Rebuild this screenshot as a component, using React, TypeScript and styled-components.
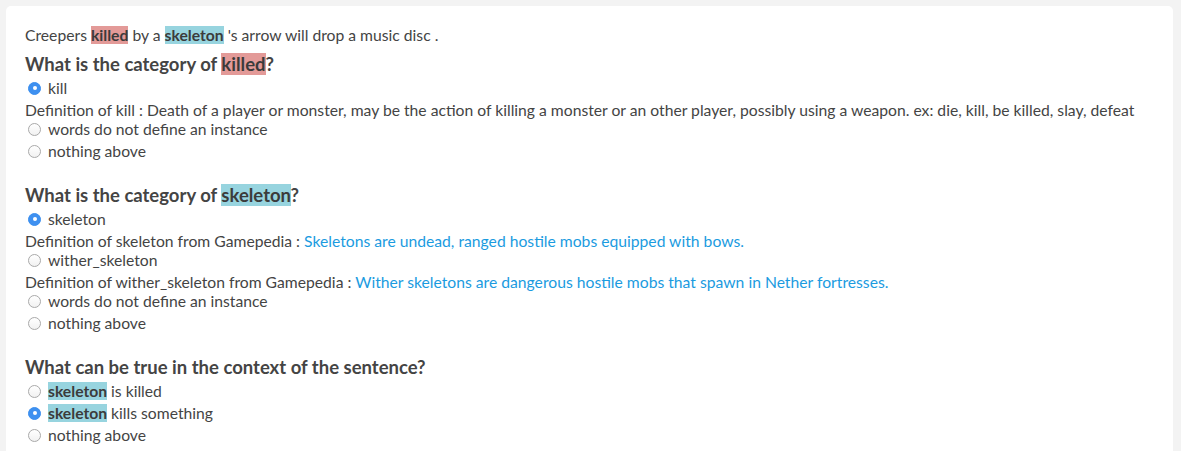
import React from "react";
import styled, { createGlobalStyle } from "styled-components";

const Global = createGlobalStyle`
  html, body { margin: 0; padding: 0; }
  body {
    background: #f3f3f3;
    font-family: Lato, "Open Sans", "Liberation Sans", sans-serif;
    color: #444;
  }
`;

const Page = styled.div`
  padding: 6px 8px 6px 6px;
`;

const Card = styled.div`
  background: #fff;
  border-radius: 5px;
  padding: 19px 19px 10px 19px;
  min-height: 440px;
  box-sizing: border-box;
`;

const Sentence = styled.div`
  font-size: 15.7px;
  line-height: 20px;
`;

const Mark = styled.span<{ $tone: "red" | "blue" }>`
  background: ${(p) => (p.$tone === "red" ? "#e39a98" : "#97d4df")};
  font-weight: 700;
  color: #3b3b3b;
`;

const Section = styled.section<{ $first?: boolean }>`
  display: flex;
  flex-direction: column;
  margin-top: ${(p) => (p.$first ? "8px" : "22px")};
`;

const Heading = styled.h3`
  margin: 0 0 2px 0;
  font-size: 18.5px;
  line-height: 22px;
  font-weight: 700;
  color: #444;
`;

const Option = styled.label`
  display: flex;
  align-items: center;
  gap: 7px;
  height: 22px;
  font-size: 15.7px;
  padding-left: 3px;
`;

const Radio = styled.span<{ $on?: boolean }>`
  width: 13px;
  height: 13px;
  box-sizing: border-box;
  border-radius: 50%;
  flex: none;
  position: relative;
  border: 1px solid ${(p) => (p.$on ? "#3b8fef" : "#a9a9a9")};
  background: ${(p) =>
    p.$on ? "#3e90f0" : "linear-gradient(#ffffff, #f1f1f1)"};
  &::after {
    content: "";
    display: ${(p) => (p.$on ? "block" : "none")};
    position: absolute;
    left: 50%;
    top: 50%;
    width: 4px;
    height: 4px;
    margin: -2px 0 0 -2px;
    border-radius: 50%;
    background: #fff;
  }
`;

const Definition = styled.div`
  font-size: 15.7px;
  line-height: 19px;
  padding-top: 2px;
  height: 19px;
  box-sizing: border-box;
  white-space: nowrap;
`;

const Gloss = styled.span`
  color: #1b9bdf;
`;

type Opt = { label: React.ReactNode; checked?: boolean; def?: React.ReactNode };

const Question = ({
  title,
  options,
  first,
}: {
  title: React.ReactNode;
  options: Opt[];
  first?: boolean;
}) => (
  <Section $first={first}>
    <Heading>{title}</Heading>
    {options.map((o, i) => (
      <React.Fragment key={i}>
        <Option>
          <Radio $on={o.checked} />
          <span>{o.label}</span>
        </Option>
        {o.def && <Definition>{o.def}</Definition>}
      </React.Fragment>
    ))}
  </Section>
);

export default function App() {
  return (
    <>
      <Global />
      <Page>
        <Card>
          <Sentence>
            Creepers <Mark $tone="red">killed</Mark> by a{" "}
            <Mark $tone="blue">skeleton</Mark> 's arrow will drop a music disc .
          </Sentence>
          <Question
            first
            title={
              <>
                What is the category of <Mark $tone="red">killed</Mark>?
              </>
            }
            options={[
              {
                label: "kill",
                checked: true,
                def: (
                  <>
                    Definition of kill : Death of a player or monster, may be the
                    action of killing a monster or an other player, possibly using a
                    weapon. ex: die, kill, be killed, slay, defeat
                  </>
                ),
              },
              { label: "words do not define an instance" },
              { label: "nothing above" },
            ]}
          />
          <Question
            title={
              <>
                What is the category of <Mark $tone="blue">skeleton</Mark>?
              </>
            }
            options={[
              {
                label: "skeleton",
                checked: true,
                def: (
                  <>
                    Definition of skeleton from Gamepedia :{" "}
                    <Gloss>Skeletons are undead, ranged hostile mobs equipped with bows.</Gloss>
                  </>
                ),
              },
              {
                label: "wither_skeleton",
                def: (
                  <>
                    Definition of wither_skeleton from Gamepedia :{" "}
                    <Gloss>
                      Wither skeletons are dangerous hostile mobs that spawn in Nether
                      fortresses.
                    </Gloss>
                  </>
                ),
              },
              { label: "words do not define an instance" },
              { label: "nothing above" },
            ]}
          />
          <Question
            title="What can be true in the context of the sentence?"
            options={[
              {
                label: (
                  <>
                    <Mark $tone="blue">skeleton</Mark> is killed
                  </>
                ),
              },
              {
                label: (
                  <>
                    <Mark $tone="blue">skeleton</Mark> kills something
                  </>
                ),
                checked: true,
              },
              { label: "nothing above" },
            ]}
          />
        </Card>
      </Page>
    </>
  );
}
